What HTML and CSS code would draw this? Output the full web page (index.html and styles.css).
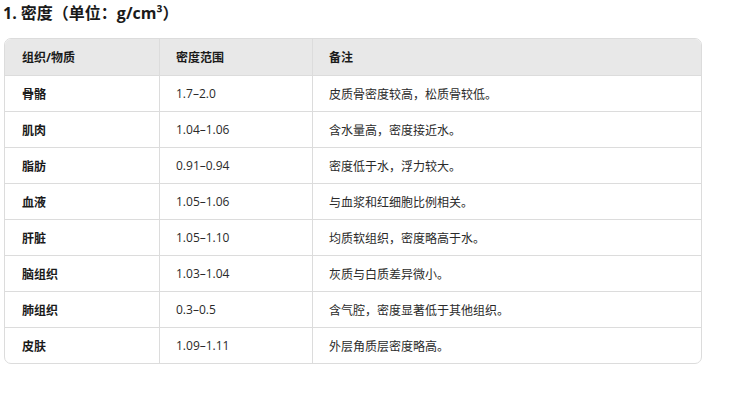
FILE: index.html
```html
<!DOCTYPE html>
<html lang="zh-CN">
<head>
<meta charset="utf-8">
<link rel="stylesheet" href="styles.css">
</head>
<body>
<h3 class="title">1. 密度（单位：g/cm³）</h3>
<div class="table-wrap">
<table class="data">
<thead>
<tr><th class="c1">组织/物质</th><th class="c2">密度范围</th><th class="c3">备注</th></tr>
</thead>
<tbody>
<tr><td class="name">骨骼</td><td>1.7–2.0</td><td>皮质骨密度较高，松质骨较低。</td></tr>
<tr><td class="name">肌肉</td><td>1.04–1.06</td><td>含水量高，密度接近水。</td></tr>
<tr><td class="name">脂肪</td><td>0.91–0.94</td><td>密度低于水，浮力较大。</td></tr>
<tr><td class="name">血液</td><td>1.05–1.06</td><td>与血浆和红细胞比例相关。</td></tr>
<tr><td class="name">肝脏</td><td>1.05–1.10</td><td>均质软组织，密度略高于水。</td></tr>
<tr><td class="name">脑组织</td><td>1.03–1.04</td><td>灰质与白质差异微小。</td></tr>
<tr><td class="name">肺组织</td><td>0.3–0.5</td><td>含气腔，密度显著低于其他组织。</td></tr>
<tr><td class="name">皮肤</td><td>1.09–1.11</td><td>外层角质层密度略高。</td></tr>
</tbody>
</table>
</div>
</body>
</html>
```
FILE: styles.css
```css
html, body {
  margin: 0;
  padding: 0;
  background: #ffffff;
}
body {
  padding: 0 4px;
  font-family: "Open Sans", "Noto Sans CJK SC", sans-serif;
  color: #1f1f1f;
}
.title {
  margin: 0 0 0 -1px;
  padding-top: 3px;
  height: 35px;
  font-size: 16px;
  font-weight: 700;
  line-height: 20px;
  font-family: "Open Sans", "Noto Sans CJK SC", sans-serif;
  color: #1a1a1a;
}
.title sup, .title {
  font-variant-position: normal;
}
.table-wrap {
  width: 698px;
  border: 1px solid #dcdcdc;
  border-radius: 7px;
  overflow: hidden;
  box-sizing: border-box;
}
.data {
  width: 100%;
  border-collapse: collapse;
  table-layout: fixed;
  font-size: 12px;
}
.data th, .data td {
  text-align: left;
  padding: 0 16px;
  border-left: 1px solid #dcdcdc;
  border-top: 1px solid #dcdcdc;
  vertical-align: middle;
  white-space: nowrap;
}
.data th:first-child, .data td:first-child {
  border-left: none;
}
.data thead th {
  border-top: none;
  background: #e8e8e8;
  height: 36px;
  font-weight: 700;
  color: #1a1a1a;
}
.data tbody td {
  height: 35px;
  color: #2a2a2a;
}
.data td.name {
  font-weight: 700;
  color: #1a1a1a;
}
.c1 { width: 121px; }
.c2 { width: 120px; }
.data th.c1, .data td.name { padding-left: 17px; }
```
